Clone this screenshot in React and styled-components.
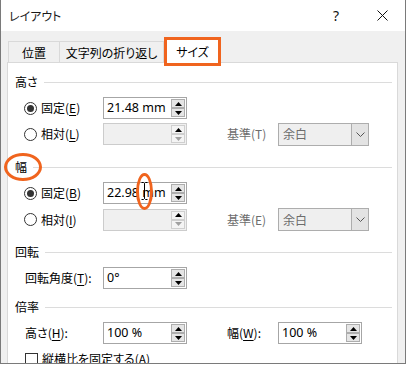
import React from "react";
import styled, { createGlobalStyle } from "styled-components";

const GlobalStyle = createGlobalStyle`
  html, body {
    margin: 0;
    padding: 0;
    background: #fff;
  }
  body {
    font-family: "Noto Sans CJK JP", "Noto Sans", sans-serif;
    font-size: 12px;
    color: #000;
    font-feature-settings: "palt";
  }
`;

const ORANGE = "#f0641e";

const UpArrow = ({ color = "#000" }) => (
  <svg width="7" height="4" viewBox="0 0 7 4">
    <path d="M3.5 0 L7 4 L0 4 Z" fill={color} />
  </svg>
);

const DownArrow = ({ color = "#000" }) => (
  <svg width="7" height="4" viewBox="0 0 7 4">
    <path d="M0 0 L7 0 L3.5 4 Z" fill={color} />
  </svg>
);

const Chevron = () => (
  <svg width="9" height="5" viewBox="0 0 9 5">
    <path d="M0.5 0.5 L4.5 4.5 L8.5 0.5" fill="none" stroke="#555" strokeWidth="1" />
  </svg>
);

const CloseIcon = () => (
  <svg width="11" height="11" viewBox="0 0 11 11">
    <path d="M0.5 0.5 L10.5 10.5 M10.5 0.5 L0.5 10.5" stroke="#111" strokeWidth="1" />
  </svg>
);

const SpinBox = ({ value, disabled }) => (
  <SpinFrame $disabled={disabled}>
    <SpinValue>{value}</SpinValue>
    <SpinButtons>
      <SpinButton $disabled={disabled}>
        <UpArrow />
      </SpinButton>
      <SpinButton $disabled={disabled}>
        <DownArrow color={disabled ? "#a0a0a0" : "#000"} />
      </SpinButton>
    </SpinButtons>
  </SpinFrame>
);

const Select = ({ value }) => (
  <SelectFrame>
    <SelectValue>{value}</SelectValue>
    <SelectButton>
      <Chevron />
    </SelectButton>
  </SelectFrame>
);

const Radio = ({ checked, label }) => (
  <OptionLabel>
    <RadioCircle>{checked && <RadioDot />}</RadioCircle>
    {label}
  </OptionLabel>
);

const App = () => {
  return (
    <>
      <GlobalStyle />
      <Window>
        <TitleBar>
          <Title>レイアウト</Title>
          <TitleButton>?</TitleButton>
          <TitleButton>
            <CloseIcon />
          </TitleButton>
        </TitleBar>

        <Body>
          <Tabs>
            <Tab $width={52}>位置</Tab>
            <Tab $width={105}>文字列の折り返し</Tab>
            <ActiveTab>サイズ</ActiveTab>
          </Tabs>

          <Panel>
            <Section>
              <Header>
                <span>高さ</span>
                <Rule />
              </Header>
              <Row>
                <LeftCell>
                  <Radio checked label={<>固定(<u>E</u>)</>} />
                </LeftCell>
                <SpinBox value="21.48 mm" />
              </Row>
              <Row>
                <LeftCell>
                  <Radio label={<>相対(<u>L</u>)</>} />
                </LeftCell>
                <SpinBox disabled value="" />
                <MidLabel $disabled>基準(T)</MidLabel>
                <Select value="余白" />
              </Row>
            </Section>

            <Section $gap={7}>
              <Header>
                <span>幅</span>
                <Rule />
              </Header>
              <Row>
                <LeftCell>
                  <Radio checked label={<>固定(<u>B</u>)</>} />
                </LeftCell>
                <SpinBox value="22.98 mm" />
              </Row>
              <Row $tall>
                <LeftCell>
                  <Radio label={<>相対(<u>I</u>)</>} />
                </LeftCell>
                <SpinBox disabled value="" />
                <MidLabel $disabled>基準(E)</MidLabel>
                <Select value="余白" />
              </Row>
            </Section>

            <Section $gap={6}>
              <Header>
                <span>回転</span>
                <Rule />
              </Header>
              <Row $indent={10}>
                <LeftCell $width={78}>
                  <OptionLabel>回転角度(<u>T</u>):</OptionLabel>
                </LeftCell>
                <SpinBox value="0°" />
              </Row>
            </Section>

            <Section $gap={3}>
              <Header>
                <span>倍率</span>
                <Rule />
              </Header>
              <Row $indent={10}>
                <LeftCell $width={78}>
                  <OptionLabel>高さ(<u>H</u>):</OptionLabel>
                </LeftCell>
                <SpinBox value="100 %" />
                <MidLabel>幅(<u>W</u>):</MidLabel>
                <SpinBox value="100 %" />
              </Row>
              <CheckRow>
                <CheckBox />
                <span>縦横比を固定する(A)</span>
              </CheckRow>
            </Section>
          </Panel>
        </Body>

        <Mark $left={3} $top={153} $w={38} $h={28} />
        <Mark $left={135} $top={173} $w={17} $h={37} />
        <Cursor>
          <svg width="7" height="18" viewBox="0 0 7 18">
            <path d="M0.5 0.5 H2.5 L3.5 1.5 L4.5 0.5 H6.5 M3.5 1.5 V16.5 M0.5 17.5 H2.5 L3.5 16.5 L4.5 17.5 H6.5" fill="none" stroke="#000" strokeWidth="1" />
          </svg>
        </Cursor>
      </Window>
    </>
  );
};

export default App;

// Styled Components
const Window = styled.div`
  position: relative;
  width: 406px;
  height: 364px;
  box-sizing: border-box;
  border: 1px solid #7a7a7a;
  border-top: none;
  background: #f0f0f0;
  overflow: hidden;
  display: flex;
  flex-direction: column;
`;

const TitleBar = styled.div`
  height: 31px;
  flex-shrink: 0;
  background: #fff;
  display: flex;
  align-items: center;
  padding-left: 8px;
`;

const Title = styled.div`
  flex: 1;
  font-size: 12px;
  color: #1a1a1a;
`;

const TitleButton = styled.div`
  width: 46px;
  height: 31px;
  display: flex;
  align-items: center;
  justify-content: center;
  font-family: "Noto Sans", sans-serif;
  font-size: 14px;
  color: #111;
`;

const Body = styled.div`
  flex: 1;
  display: flex;
  flex-direction: column;
  padding: 10px 7px 0 6px;
  min-height: 0;
`;

const Tabs = styled.div`
  display: flex;
  align-items: flex-start;
  height: 21px;
  padding-left: 1px;
  position: relative;
  z-index: 1;
`;

const Tab = styled.div`
  width: ${(p) => p.$width}px;
  height: 21px;
  box-sizing: border-box;
  border: 1px solid #d9d9d9;
  border-bottom: none;
  background: #f0f0f0;
  display: flex;
  align-items: center;
  justify-content: center;
  padding-top: 1px;
  line-height: 1;
  & + & {
    margin-left: -1px;
  }
`;

const ActiveTab = styled.div`
  box-sizing: border-box;
  width: 57px;
  height: 29px;
  margin-top: -4px;
  border: 3px solid ${ORANGE};
  background: #fff;
  display: flex;
  align-items: center;
  justify-content: center;
  padding-top: 1px;
  line-height: 1;
`;

const Panel = styled.div`
  flex: 1;
  background: #fff;
  border: 1px solid #d9d9d9;
  border-bottom: none;
  padding: 6px 5px 0 7px;
  min-height: 0;
`;

const Section = styled.div`
  margin-top: ${(p) => p.$gap || 0}px;
`;

const Header = styled.div`
  height: 26px;
  display: flex;
  align-items: center;
  gap: 6px;
  line-height: 1;
`;

const Rule = styled.div`
  flex: 1;
  height: 1px;
  background: #dcdcdc;
`;

const Row = styled.div`
  height: ${(p) => (p.$tall ? 27 : 26)}px;
  display: flex;
  align-items: center;
  padding-left: ${(p) => p.$indent || 9}px;
`;

const LeftCell = styled.div`
  width: ${(p) => p.$width || 79}px;
  flex-shrink: 0;
`;

const OptionLabel = styled.div`
  display: flex;
  align-items: center;
  line-height: 1;
  u {
    text-underline-offset: 2px;
  }
`;

const RadioCircle = styled.span`
  width: 13px;
  height: 13px;
  box-sizing: border-box;
  border: 1px solid #333;
  border-radius: 50%;
  margin-right: 4px;
  display: flex;
  align-items: center;
  justify-content: center;
  background: #fff;
`;

const RadioDot = styled.span`
  width: 7px;
  height: 7px;
  border-radius: 50%;
  background: #333;
`;

const SpinFrame = styled.div`
  width: 84px;
  height: 22px;
  box-sizing: border-box;
  flex-shrink: 0;
  border: 1px solid ${(p) => (p.$disabled ? "#cccccc" : "#a6a6a6")};
  background: ${(p) => (p.$disabled ? "#f0f0f0" : "#fff")};
  display: flex;
  align-items: stretch;
  padding: 1px 1px 1px 3px;
`;

const SpinValue = styled.div`
  flex: 1;
  display: flex;
  align-items: center;
  font-family: "Noto Sans", sans-serif;
  font-size: 12.5px;
  line-height: 1;
  white-space: nowrap;
`;

const SpinButtons = styled.div`
  width: 14px;
  display: flex;
  flex-direction: column;
`;

const SpinButton = styled.div`
  flex: 1;
  box-sizing: border-box;
  border: 1px solid ${(p) => (p.$disabled ? "#cfcfcf" : "#adadad")};
  background: ${(p) => (p.$disabled ? "#f4f4f4" : "#e5e5e5")};
  display: flex;
  align-items: center;
  justify-content: center;
`;

const MidLabel = styled.div`
  width: 51px;
  margin-left: 40px;
  flex-shrink: 0;
  line-height: 1;
  color: ${(p) => (p.$disabled ? "#6d6d6d" : "#000")};
  u {
    text-underline-offset: 2px;
  }
`;

const SelectFrame = styled.div`
  width: 91px;
  height: 23px;
  box-sizing: border-box;
  border: 1px solid #adadad;
  background: #efefef;
  display: flex;
`;

const SelectValue = styled.div`
  flex: 1;
  display: flex;
  align-items: center;
  padding-left: 4px;
  color: #6d6d6d;
  line-height: 1;
`;

const SelectButton = styled.div`
  width: 16px;
  border-left: 1px solid #adadad;
  background: #e3e3e3;
  display: flex;
  align-items: center;
  justify-content: center;
`;

const CheckRow = styled.div`
  height: 24px;
  margin-top: 1px;
  display: flex;
  align-items: center;
  padding-left: 10px;
  gap: 4px;
  line-height: 1;
`;

const CheckBox = styled.span`
  width: 13px;
  height: 13px;
  box-sizing: border-box;
  border: 1px solid #333;
  background: #fff;
`;

const Mark = styled.div`
  position: absolute;
  left: ${(p) => p.$left}px;
  top: ${(p) => p.$top}px;
  width: ${(p) => p.$w}px;
  height: ${(p) => p.$h}px;
  box-sizing: border-box;
  border: 3px solid ${ORANGE};
  border-radius: 50%;
  pointer-events: none;
`;

const Cursor = styled.div`
  position: absolute;
  left: 140px;
  top: 182px;
  width: 7px;
  height: 18px;
  pointer-events: none;
`;
